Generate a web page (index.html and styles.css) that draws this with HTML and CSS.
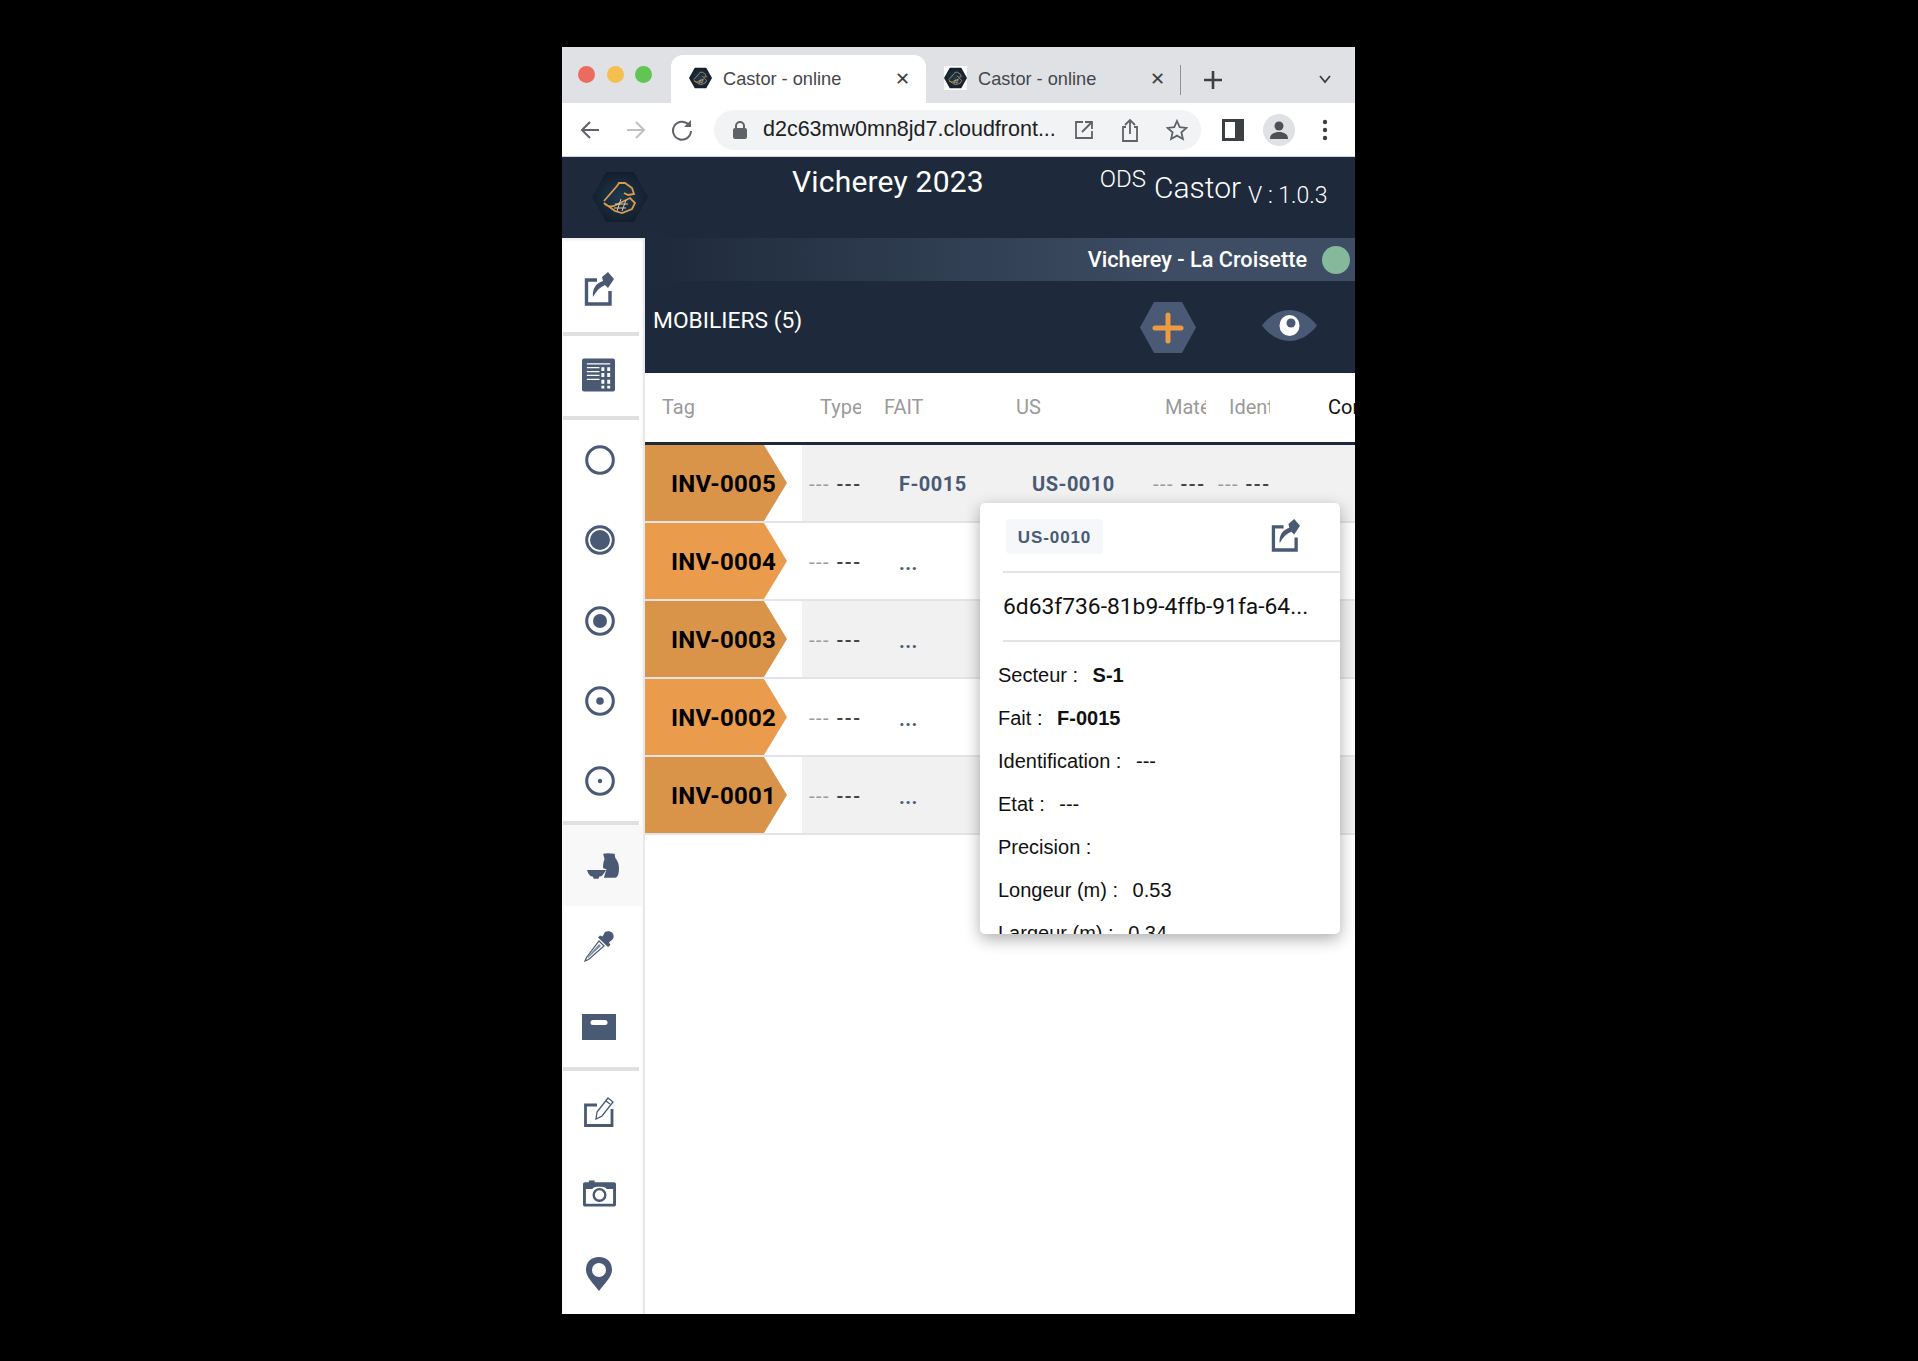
FILE: index.html
```html
<!DOCTYPE html>
<html lang="fr">
<head>
  <meta charset="UTF-8" />
  <title>Castor - online</title>
  <link rel="stylesheet" href="styles.css">
</head>
<body>
  <svg class="sprites" width="0" height="0">
    <defs>
      <radialGradient id="hex-fill">
        <stop offset="0" stop-color="#1f3a50"/>
        <stop offset="1" stop-color="#141f2e"/>
      </radialGradient>
    </defs>
    <symbol id="hex-logo" viewBox="0 0 56 50">
      <path d="M14 0H42L56 25L42 50H14L0 25Z" fill="url(#hex-fill)"/>
      <path d="M12 29L25 14L27 11H33L40 16L42 22L36 23L32 21" fill="none" stroke="#dc9b4c" stroke-width="1.800"/>
      <path d="M12 31C16 36 20 35 24 33L38 26L43 31L40 37L30 41L23 39L12 31" fill="none" stroke="#dc9b4c" stroke-width="1.800"/>
      <path d="M29 27L25 39M34 28L30 39M23 32H36M22 36H34" fill="none" stroke="#d9c9a5" stroke-width="1"/>
    </symbol>
    <symbol id="ico-share" viewBox="0 0 30 34">
      <path d="M13 8H2.500V32H26V19" fill="none" stroke="currentColor" stroke-width="3.400"/>
      <path d="M9 25C8 17 12 11 19 9L18 5L24 0L30 7L24 16L21 13C16 15 12 19 9 25Z" fill="currentColor"/>
    </symbol>
    <symbol id="ico-grid" viewBox="0 0 34 34">
      <rect width="34" height="34" rx="2" fill="currentColor"/>
      <path d="M5 5.500H29M5 9.500H18M5 13.500H18M5 17.500H18M5 21.500H18" stroke="#fff" stroke-width="1.300"/>
      <path d="M20 9h3v4h-3zM26 9h3v4h-3zM20 15h3v4h-3zM26 15h3v4h-3zM20 22h3v4h-3zM26 22h3v4h-3zM26 28h3v3h-3zM20 28h3v3h-3z" fill="#fff"/>
    </symbol>
    <symbol id="ico-pot" viewBox="0 0 95 76">
      <path d="M48 2Q60 -2 82 2L84 14Q95 26 95 46Q95 70 84 73L50 73L58 48L48 45Q46 30 52 18Z" fill="currentColor"/>
      <path d="M0 50H57L49 62Q45 70 36 70L34 76H20L18 70Q8 68 4 60Z" fill="currentColor"/>
    </symbol>
    <symbol id="ico-dropper" viewBox="0 0 30 31">
      <path d="M21 1C23 -0.500 27 0 28.500 2C30 4 30 6 29 8L25 11.500L26.500 14L24 16L14 6.500L16 4.500L18.500 5.500Z" fill="currentColor"/>
      <path d="M15 10L20 15L4.500 28.500L1 30L2.500 26.500Z" fill="none" stroke="currentColor" stroke-width="1.200"/>
      <path d="M15 13L17 15L4.500 26.500L3.500 27L4 25.500Z" fill="currentColor" opacity="0.700"/>
    </symbol>
    <symbol id="ico-box" viewBox="0 0 34 26">
      <path d="M0 0H34V26H0Z" fill="currentColor"/>
      <rect x="8.500" y="6" width="17" height="5" rx="2.500" fill="#fff"/>
    </symbol>
    <symbol id="ico-edit" viewBox="0 0 30 30">
      <path d="M13 8H1.500V28.500H28V12" fill="none" stroke="currentColor" stroke-width="2.800"/>
      <path d="M12 22L13 15L24 1L29 5L18 19Z" fill="#fff" stroke="currentColor" stroke-width="1.300"/>
      <path d="M22 4L26 7" stroke="currentColor" stroke-width="1.300"/>
    </symbol>
    <symbol id="ico-camera" viewBox="0 0 34 27">
      <path d="M6 0H12V2H32C33 2 34 3 34 4V25C34 26 33 27 32 27H2C1 27 0 26 0 25V4C0 3 1 2 2 2H6Z" fill="currentColor"/>
      <path d="M3 8V24H31V8H24C21 6 13 6 10 8Z" fill="#fff"/>
      <circle cx="17" cy="15" r="6" fill="none" stroke="currentColor" stroke-width="2.500"/>
      <path d="M3 8H10M24 8H31" stroke="currentColor" stroke-width="1.500"/>
    </symbol>
    <symbol id="ico-pin" viewBox="0 0 26 34">
      <path fill-rule="evenodd" d="M13 0C21 0 26 5 26 13C26 20 18 27 13 34C8 27 0 20 0 13C0 5 5 0 13 0ZM13 6A7 7 0 1 0 13 20A7 7 0 1 0 13 6Z" fill="currentColor"/>
    </symbol>
  </svg>

  <div class="window">
    <div class="tabbar">
      <div class="lights"><span class="light red"></span><span class="light yellow"></span><span class="light green"></span></div>
      <div class="tab active">
        <svg class="favicon"><use href="#hex-logo"/></svg>
        <span class="tab-title">Castor - online</span>
        <span class="tab-close">✕</span>
      </div>
      <div class="tab">
        <svg class="favicon on-white"><use href="#hex-logo"/></svg>
        <span class="tab-title">Castor - online</span>
        <span class="tab-close">✕</span>
      </div>
      <span class="tab-sep"></span>
      <svg class="new-tab" width="20" height="20" viewBox="0 0 20 20"><path d="M10 1V19M1 10H19" stroke="#3c4043" stroke-width="2.600"/></svg>
      <svg class="tab-menu" width="14" height="10" viewBox="0 0 14 10"><path d="M2 2L7 8L12 2" fill="none" stroke="#3c4043" stroke-width="1.800"/></svg>
    </div>

    <div class="toolbar">
      <svg class="nav-ico" width="22" height="22" viewBox="0 0 22 22"><path d="M20 11H3M11 3L3 11L11 19" fill="none" stroke="#5f6368" stroke-width="2"/></svg>
      <svg class="nav-ico" width="22" height="22" viewBox="0 0 22 22"><path d="M2 11H19M11 3L19 11L11 19" fill="none" stroke="#bdc0c4" stroke-width="2"/></svg>
      <svg class="nav-ico" width="22" height="22" viewBox="0 0 22 22"><path d="M18 6A9 9 0 1 0 20 12" fill="none" stroke="#5f6368" stroke-width="2"/><path d="M20 1V8H13Z" fill="#5f6368"/></svg>
      <div class="omnibox">
        <svg width="14" height="18" viewBox="0 0 14 18"><path d="M3 8V5A4 4 0 0 1 11 5V8" fill="none" stroke="#5f6368" stroke-width="2"/><rect y="7" width="14" height="11" rx="2" fill="#5f6368"/></svg>
        <span class="url">d2c63mw0mn8jd7.cloudfront...</span>
        <svg class="omni-ico" width="20" height="20" viewBox="0 0 20 20"><path d="M9 2H2V18H18V11M11 2H18V9M18 2L8 12" fill="none" stroke="#5f6368" stroke-width="1.800"/></svg>
        <svg class="omni-ico" width="20" height="24" viewBox="0 0 20 24"><path d="M6 9H3V23H17V9H14M10 16V2M5 7L10 2L15 7" fill="none" stroke="#5f6368" stroke-width="1.800"/></svg>
        <svg class="omni-ico" width="22" height="22" viewBox="0 0 22 22"><path d="M11 2L13.700 8.200L20.500 8.900L15.400 13.400L16.900 20L11 16.600L5.100 20L6.600 13.400L1.500 8.900L8.300 8.200Z" fill="none" stroke="#5f6368" stroke-width="1.800"/></svg>
      </div>
      <svg class="panel-ico" width="22" height="22" viewBox="0 0 22 22"><rect x="1.500" y="1.500" width="19" height="19" fill="#fff" stroke="#3c4043" stroke-width="3"/><rect x="13" y="2" width="7" height="18" fill="#3c4043"/></svg>
      <span class="avatar"><svg width="20" height="20" viewBox="0 0 20 20"><circle cx="10" cy="6" r="4.500" fill="#4d5156"/><path d="M1 19C1 14 5 12 10 12C15 12 19 14 19 19Z" fill="#4d5156"/></svg></span>
      <svg class="menu-ico" width="6" height="22" viewBox="0 0 6 22"><circle cx="3" cy="3" r="2.200" fill="#3c4043"/><circle cx="3" cy="11" r="2.200" fill="#3c4043"/><circle cx="3" cy="19" r="2.200" fill="#3c4043"/></svg>
    </div>

    <header class="app-header">
      <svg class="app-logo"><use href="#hex-logo"/></svg>
      <div class="app-title">Vicherey 2023</div>
      <div class="app-ods">ODS</div>
      <div class="app-name">Castor</div>
      <div class="app-version">V : 1.0.3</div>
    </header>

    <div class="app-body">
      <nav class="sidebar">
        <div class="side-group first">
          <a class="side-item"><svg class="ico-share"><use href="#ico-share"/></svg></a>
        </div>
        <div class="side-group second">
          <a class="side-item"><svg class="ico-grid"><use href="#ico-grid"/></svg></a>
        </div>
        <div class="side-group circles">
          <a class="side-item"><svg class="ico-circle" viewBox="0 0 30 30"><circle cx="15" cy="15" r="13.300" fill="none" stroke="currentColor" stroke-width="3"/></svg></a>
          <a class="side-item"><svg class="ico-circle" viewBox="0 0 30 30"><circle cx="15" cy="15" r="13.300" fill="none" stroke="currentColor" stroke-width="3"/><circle cx="15" cy="15" r="10" fill="currentColor"/></svg></a>
          <a class="side-item"><svg class="ico-circle" viewBox="0 0 30 30"><circle cx="15" cy="15" r="13.300" fill="none" stroke="currentColor" stroke-width="3"/><circle cx="15" cy="15" r="7" fill="currentColor"/></svg></a>
          <a class="side-item"><svg class="ico-circle" viewBox="0 0 30 30"><circle cx="15" cy="15" r="13.300" fill="none" stroke="currentColor" stroke-width="3"/><circle cx="15" cy="15" r="3.800" fill="currentColor"/></svg></a>
          <a class="side-item"><svg class="ico-circle" viewBox="0 0 30 30"><circle cx="15" cy="15" r="13.300" fill="none" stroke="currentColor" stroke-width="3"/><circle cx="15" cy="15" r="2.200" fill="currentColor"/></svg></a>
        </div>
        <div class="side-group">
          <a class="side-item current"><svg class="ico-pot"><use href="#ico-pot"/></svg></a>
          <a class="side-item"><svg class="ico-dropper"><use href="#ico-dropper"/></svg></a>
          <a class="side-item"><svg class="ico-box"><use href="#ico-box"/></svg></a>
        </div>
        <div class="side-group last">
          <a class="side-item"><svg class="ico-edit"><use href="#ico-edit"/></svg></a>
          <a class="side-item"><svg class="ico-camera"><use href="#ico-camera"/></svg></a>
          <a class="side-item"><svg class="ico-pin"><use href="#ico-pin"/></svg></a>
        </div>
      </nav>

      <main class="content">
        <div class="site-strip">
          <span class="site-name">Vicherey - La Croisette</span>
          <span class="site-dot"></span>
        </div>
        <div class="title-panel">
          <span class="panel-title">MOBILIERS (5)</span>
          <svg class="add-btn" width="56" height="51" viewBox="0 0 56 51"><path d="M14 0H42L56 25.500L42 51H14L0 25.500Z" fill="#4a5a75"/><path d="M28 13V39M15 26H41" stroke="#ec9b45" stroke-width="5" stroke-linecap="round"/></svg>
          <svg class="eye-btn" width="55" height="31" viewBox="0 0 55 31"><path d="M0 15.500C8 5 18 0 27.500 0C37 0 47 5 55 15.500C47 26 37 31 27.500 31C18 31 8 26 0 15.500Z" fill="#4a5a75"/><ellipse cx="27.500" cy="15.500" rx="10" ry="10.500" fill="#fff"/><circle cx="29" cy="13" r="4.500" fill="#4a5a75"/></svg>
        </div>

        <div class="table-head">
          <span class="th th-tag">Tag</span>
          <span class="th th-type"><span class="clip">Type</span></span>
          <span class="th th-fait">FAIT</span>
          <span class="th th-us">US</span>
          <span class="th th-mat"><span class="clip">Matériau</span></span>
          <span class="th th-ident"><span class="clip">Identification</span></span>
          <span class="th th-com">Commentaire</span>
        </div>

        <div class="row odd">
          <div class="tag-cell"><span class="tag">INV-0005</span></div>
          <span class="td td-type dash"><i>---</i> <b>---</b></span>
          <span class="td td-fait link">F-0015</span>
          <span class="td td-us link">US-0010</span>
          <span class="td td-mat dash"><i>---</i> <b>---</b></span>
          <span class="td td-ident dash"><i>---</i> <b>---</b></span>
        </div>
        <div class="row">
          <div class="tag-cell"><span class="tag">INV-0004</span></div>
          <span class="td td-type dash"><i>---</i> <b>---</b></span>
          <span class="td td-fait link dots">...</span>
        </div>
        <div class="row odd">
          <div class="tag-cell"><span class="tag">INV-0003</span></div>
          <span class="td td-type dash"><i>---</i> <b>---</b></span>
          <span class="td td-fait link dots">...</span>
        </div>
        <div class="row">
          <div class="tag-cell"><span class="tag">INV-0002</span></div>
          <span class="td td-type dash"><i>---</i> <b>---</b></span>
          <span class="td td-fait link dots">...</span>
        </div>
        <div class="row odd">
          <div class="tag-cell"><span class="tag">INV-0001</span></div>
          <span class="td td-type dash"><i>---</i> <b>---</b></span>
          <span class="td td-fait link dots">...</span>
        </div>
      </main>
    </div>

    <!-- popup ouvert sur US-0010 -->
    <div class="popup">
      <div class="popup-top">
        <span class="chip">US-0010</span>
        <svg class="popup-share"><use href="#ico-share"/></svg>
      </div>
      <div class="popup-uuid">6d63f736-81b9-4ffb-91fa-64...</div>
      <div class="popup-fields">
        <p>Secteur : <strong>S-1</strong></p>
        <p>Fait : <strong>F-0015</strong></p>
        <p>Identification : <span>---</span></p>
        <p>Etat : <span>---</span></p>
        <p>Precision :</p>
        <p>Longeur (m) : <span>0.53</span></p>
        <p>Largeur (m) : <span>0.34</span></p>
      </div>
    </div>
  </div>
</body>
</html>
```

FILE: styles.css
```css
:root {
  --navy: #1e2a3b;
  --slate: #4a5a75;
  --orange: #ea9b4c;
  --orange-dark: #d9944a;
  --row-bg: #f1f1f2;
  --line: #e2e4e8;
}
* {
  box-sizing: border-box;
}
body {
  margin: 0;
  padding: 47px 0 0 562px;
  height: 1361px;
  overflow: hidden;
  background-color: #000;
  font-family: Roboto, 'Liberation Sans', sans-serif;
}
.sprites {
  display: block;
  height: 0;
}
.window {
  position: relative;
  width: 793px;
  height: 1267px;
  background-color: #fff;
  overflow: hidden;
  display: flex;
  flex-direction: column;
}

/* ==== navigateur ==== */
.tabbar {
  height: 56px;
  background-color: #dfe1e5;
  display: flex;
  align-items: flex-end;
  flex-shrink: 0;
}
.lights {
  width: 109px;
  height: 56px;
  padding: 19px 0 0 16px;
  display: flex;
  gap: 11.5px;
}
.light {
  width: 17px;
  height: 17px;
  border-radius: 50%;
}
.light.red { background-color: #ed6a5e; }
.light.yellow { background-color: #f5bf4f; }
.light.green { background-color: #61c554; }
.tab {
  width: 255px;
  height: 48px;
  display: flex;
  align-items: center;
  padding: 0 10px 2px 18px;
  color: #45474a;
}
.tab.active {
  background-color: #fff;
  border-radius: 12px 12px 0 0;
}
.favicon {
  width: 23px;
  height: 24px;
  flex-shrink: 0;
}
.favicon.on-white {
  background-color: #fff;
}
.tab-title {
  margin: 3px 0 0 11px;
  font-family: 'Liberation Sans', sans-serif;
  font-size: 18.2px;
  width: 172px;
  white-space: nowrap;
}
.tab-close {
  font-size: 18px;
  color: #3c4043;
}
.tab-sep {
  width: 1px;
  height: 30px;
  background-color: #8f9296;
  margin: 0 0 8px -1px;
}
.new-tab {
  margin: 0 0 13px 22px;
}
.tab-menu {
  margin: 0 0 19px 95px;
}
.toolbar {
  height: 54px;
  flex-shrink: 0;
  background-color: #fff;
  border-bottom: 1px solid #d0d2d6;
  display: flex;
  align-items: center;
  padding-left: 17px;
}
.nav-ico {
  margin-right: 24px;
}
.omnibox {
  width: 487px;
  height: 40px;
  margin-left: -3px;
  border-radius: 20px;
  background-color: #f1f3f4;
  display: flex;
  align-items: center;
  padding-left: 19px;
}
.url {
  width: 311px;
  margin-left: 16px;
  font-family: 'Liberation Sans', sans-serif;
  font-size: 21.5px;
  color: #202124;
  white-space: nowrap;
}
.omni-ico {
  margin-right: 26px;
}
.omni-ico:last-child {
  margin-right: 0;
}
.panel-ico {
  margin-left: 21px;
}
.avatar {
  width: 32px;
  height: 32px;
  margin-left: 19px;
  border-radius: 50%;
  background-color: #dfe1e5;
  display: flex;
  align-items: center;
  justify-content: center;
}
.menu-ico {
  margin-left: 27px;
}

/* ==== entete app ==== */
.app-header {
  height: 81px;
  flex-shrink: 0;
  background-color: var(--navy);
  display: flex;
  align-items: flex-start;
  color: #fff;
}
.app-logo {
  width: 56px;
  height: 50px;
  margin: 15px 0 0 30px;
}
.app-title {
  margin: 7px 0 0 144px;
  font-size: 30px;
  line-height: 36px;
  letter-spacing: 0.2px;
  white-space: nowrap;
}
.app-ods {
  margin: 8px 0 0 116px;
  font-size: 24px;
  font-weight: 300;
  line-height: 28px;
}
.app-name {
  margin: 11px 0 0 8px;
  font-size: 30px;
  font-weight: 300;
  line-height: 40px;
}
.app-version {
  margin: 26px 0 0 7px;
  font-size: 23px;
  font-weight: 300;
  line-height: 26px;
  white-space: nowrap;
}
.app-body {
  flex: 1;
  display: flex;
  min-height: 0;
}

/* ==== barre laterale ==== */
.sidebar {
  width: 83px;
  flex-shrink: 0;
  border-right: 2px solid #e8e8e8;
  color: var(--slate);
  display: flex;
  flex-direction: column;
  box-shadow: inset 0 2px 3px rgba(0,0,0,0.08);
}
.side-group {
  display: flex;
  flex-direction: column;
  flex-shrink: 0;
  height: 246px;
}
.side-group::after {
  content: '';
  height: 4px;
  margin: 0 4px 0 1px;
  background-color: #e0e0e0;
}
.side-group.last::after {
  display: none;
}
.side-group.first { height: 98px; }
.side-group.second { height: 84px; }
.side-group.circles { height: 405px; }
.side-group.last { height: 243px; }
.side-item {
  flex: 1;
  display: flex;
  align-items: center;
  justify-content: center;
  padding-right: 7px;
}
.side-group.first .side-item {
  padding-top: 8px;
}
.side-group.second .side-item {
  padding-bottom: 2px;
}
.side-group.circles .side-item {
  padding-right: 5px;
}
.side-item.current {
  background-color: #f8f8f8;
}
.ico-share { width: 30px; height: 34px; }
.ico-grid { width: 33px; height: 34px; margin-right: 1px; }
.ico-circle { width: 30px; height: 30px; }
.ico-pot { width: 32px; height: 26px; margin: 2px 0 0 7px; }
.ico-dropper { width: 30px; height: 31px; }
.ico-box { width: 34px; height: 26px; }
.ico-edit { width: 30px; height: 30px; }
.ico-camera { width: 33px; height: 27px; margin-top: 2px; }
.ico-pin { width: 26px; height: 34px; }

/* ==== contenu ==== */
.content {
  flex: 1;
  min-width: 0;
  overflow: hidden;
}
.site-strip {
  height: 43px;
  background: linear-gradient(to right, var(--navy), #3e4d64 75%);
  display: flex;
  align-items: center;
  justify-content: flex-end;
  padding-right: 5px;
}
.site-name {
  color: #fff;
  font-size: 21.7px;
  font-weight: 500;
  margin-right: 15px;
}
.site-dot {
  width: 28px;
  height: 28px;
  border-radius: 50%;
  background-color: #86b89c;
}
.title-panel {
  height: 92px;
  background-color: var(--navy);
  display: flex;
  align-items: flex-start;
  color: #fff;
}
.panel-title {
  margin: 26px 0 0 8px;
  width: 487px;
  font-size: 22.8px;
  line-height: 28px;
}
.add-btn {
  margin-top: 21px;
}
.eye-btn {
  margin: 29px 0 0 66px;
}
.table-head {
  height: 72px;
  border-bottom: 3px solid var(--navy);
  display: flex;
  align-items: center;
  padding-bottom: 2px;
  color: #9a9a9a;
  font-size: 20px;
  white-space: nowrap;
}
.th {
  flex-shrink: 0;
}
.clip {
  display: block;
  overflow: hidden;
  width: 41px;
}
.th-tag { width: 175px; padding-left: 17px; }
.th-type { width: 64px; }
.th-fait { width: 132px; }
.th-us { width: 149px; }
.th-mat { width: 64px; }
.th-ident { width: 99px; }
.th-com { color: #111; }

.row {
  height: 78px;
  border-bottom: 2px solid var(--line);
  display: flex;
  align-items: center;
  white-space: nowrap;
  background-color: #fff;
}
.row.odd {
  background-color: var(--row-bg);
}
.tag-cell {
  width: 157px;
  height: 76px;
  background-color: #fff;
  flex-shrink: 0;
}
.tag {
  display: flex;
  align-items: center;
  width: 142px;
  height: 100%;
  padding: 2px 0 0 26px;
  background-color: var(--orange);
  clip-path: polygon(0 0, 119px 0, 100% 50%, 119px 100%, 0 100%);
  color: #000;
  font-size: 24px;
  font-weight: 700;
  letter-spacing: 0.3px;
}
.row.odd .tag {
  background-color: var(--orange-dark);
}
.td {
  font-size: 20px;
  flex-shrink: 0;
  padding-top: 1px;
}
.td i {
  font-style: normal;
  color: #9a9a9a;
}
.td b {
  font-weight: 500;
  color: #444;
}
.dash {
  padding-top: 1px;
  letter-spacing: 1.5px;
}
.td-type { width: 97px; padding-left: 7px; }
.td-fait { width: 133px; }
.td-us { width: 121px; }
.td-mat { width: 65px; }
.link {
  color: var(--slate);
  font-weight: 700;
  letter-spacing: 0.5px;
}
.dots {
  padding-top: 4px;
}

/* ==== popup US ==== */
.popup {
  position: absolute;
  left: 418px;
  top: 456px;
  width: 360px;
  height: 431px;
  background-color: #fff;
  border-radius: 5px;
  box-shadow: 0 5px 16px rgba(0,0,0,0.32);
  overflow: hidden;
}
.popup-top {
  height: 70px;
  margin-left: 23px;
  border-bottom: 2px solid var(--line);
  display: flex;
  align-items: flex-start;
}
.chip {
  margin: 16px 0 0 3px;
  width: 97px;
  height: 35px;
  border-radius: 4px;
  background-color: #f5f7fa;
  color: var(--slate);
  font-family: 'Liberation Sans', sans-serif;
  font-size: 17px;
  font-weight: 700;
  letter-spacing: 0.9px;
  line-height: 37px;
  text-align: center;
}
.popup-share {
  width: 29px;
  height: 33px;
  margin: 16px 0 0 168px;
  color: var(--slate);
}
.popup-uuid {
  height: 69px;
  margin-left: 23px;
  border-bottom: 2px solid var(--line);
  font-size: 22.8px;
  line-height: 67px;
  color: #111;
  white-space: nowrap;
}
.popup-fields {
  padding: 11.5px 0 0 18px;
  font-family: 'Liberation Sans', sans-serif;
  font-size: 20px;
  color: #111;
}
.popup-fields p {
  margin: 0;
  height: 43.1px;
  line-height: 43px;
  white-space: nowrap;
}
.popup-fields strong,
.popup-fields span {
  margin-left: 9px;
}
```
